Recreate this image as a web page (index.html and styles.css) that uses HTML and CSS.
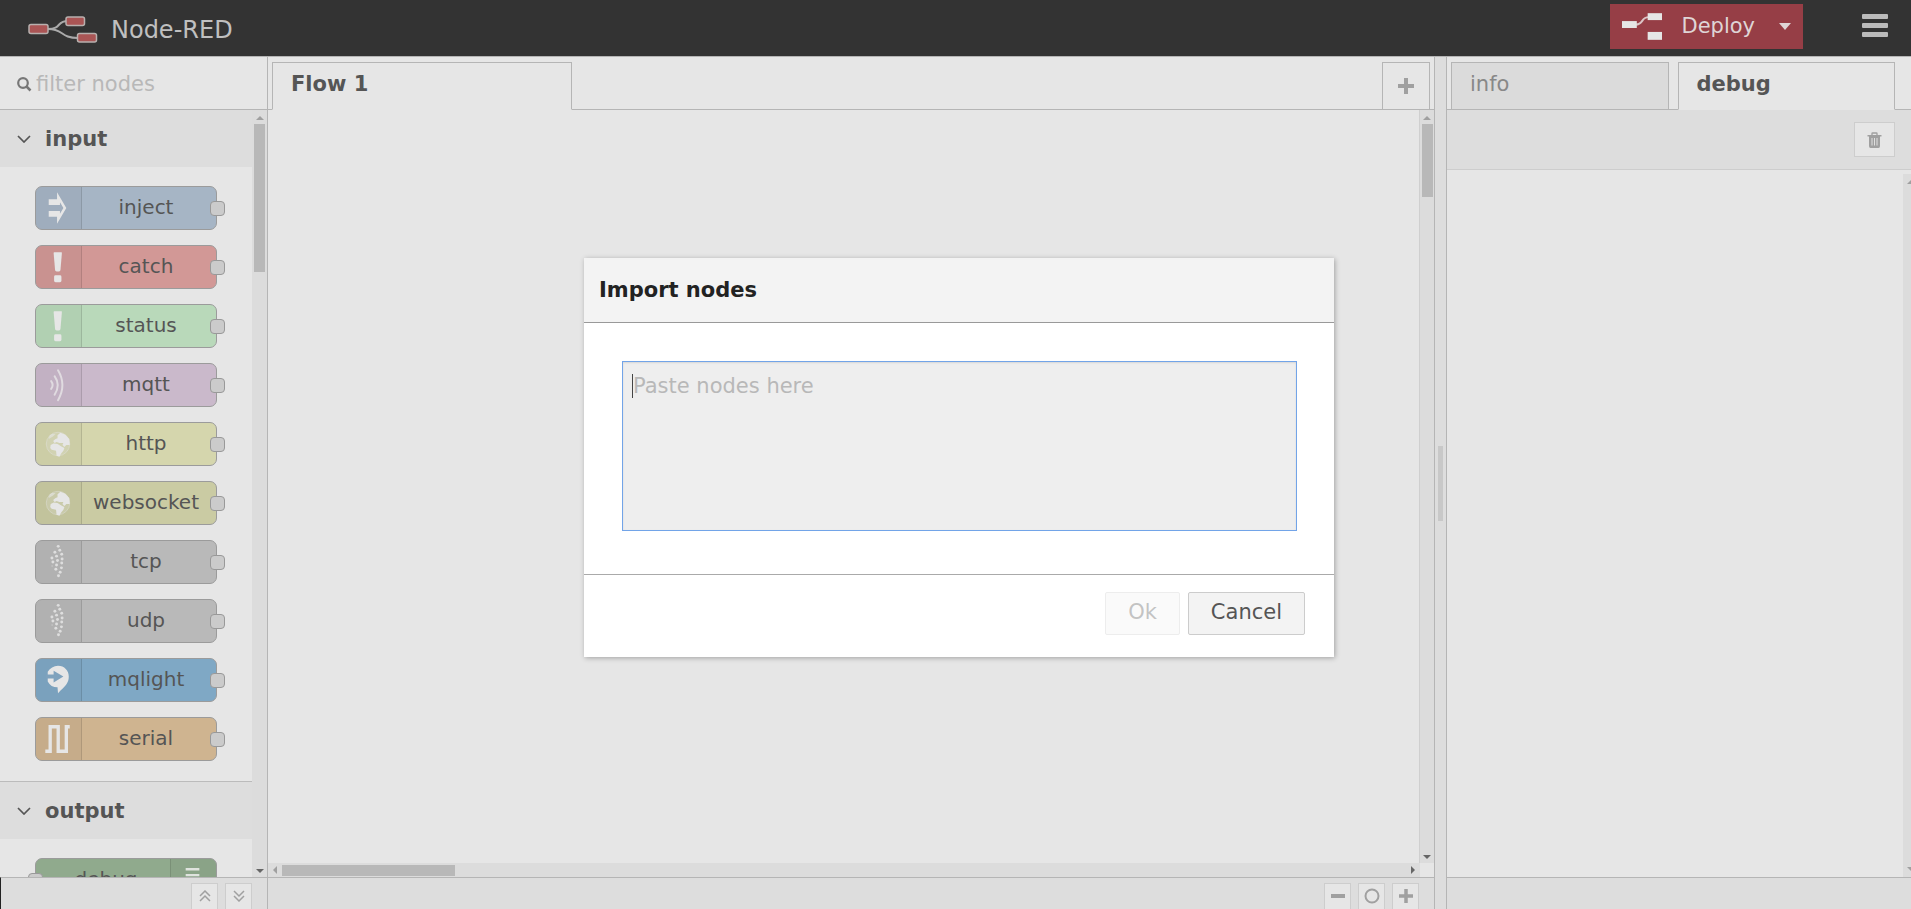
FILE: index.html
```html
<!DOCTYPE html>
<html lang="en">
<head>
<meta charset="utf-8">
<title>Node-RED</title>
<link rel="stylesheet" href="styles.css">
</head>
<body>
<svg class="defs" aria-hidden="true">
  <symbol id="i-inject" viewBox="0 0 46 42"><path fill="#e6e6e6" d="M13 12H21.500V5L31 21L21.500 37V30H13V24H24.500V27L28 21L24.500 15V18H13Z"/></symbol>
  <symbol id="i-alert" viewBox="0 0 46 42"><path fill="#e6e6e6" d="M18 6.500Q18 6 18.500 6H26Q26.500 6 26.500 6.500L25 24Q24.800 25.500 23.500 25.500H21Q19.700 25.500 19.500 24Z"/><rect x="18.500" y="29.500" width="7.500" height="7" rx="1.500" fill="#e6e6e6"/></symbol>
  <symbol id="i-wave" viewBox="0 0 46 42"><g fill="none" stroke="#e0dbe0" stroke-width="2" stroke-linecap="round"><path d="M15.500 17Q18.500 21 15.500 25"/><path d="M19 12Q25.500 21 19 31"/><path d="M22.500 6Q31.500 21 22.500 36.500"/></g></symbol>
  <symbol id="i-globe" viewBox="0 0 46 42"><circle cx="22.500" cy="21" r="12" fill="#e6e6e6" fill-opacity=".2" stroke="#e6e6e6" stroke-opacity=".4"/><g fill="#e6e6e6"><path d="M22 12L25 9.500L30 11.500L34 16L34.500 22L31 22L29 24L27 22L28 20L24 20L21 19L19 20L17.500 18L20 16L22 15Z"/><path d="M15 22L18 20.500L22 21L26 23.500L29 25L28 28L25.500 31L24 34L21 33L20.500 28L16 27L14.500 25Z"/><path d="M14 12L17 10.500L20 11L17 13.500L13 16Z" fill-opacity=".6"/></g></symbol>
  <symbol id="i-dots" viewBox="0 0 46 42"><g fill="#dedede"><circle cx="22.700" cy="5" r="1.500"/><circle cx="19.300" cy="11" r="1.500"/><circle cx="24.300" cy="9" r="1.500"/><circle cx="16.300" cy="17" r="1.500"/><circle cx="21" cy="15" r="1.500"/><circle cx="26.300" cy="13" r="1.500"/><circle cx="17.300" cy="21" r="1.500"/><circle cx="22" cy="19.500" r="1.500"/><circle cx="26.700" cy="18" r="1.500"/><circle cx="16.500" cy="25" r="1" fill-opacity=".3"/><circle cx="21" cy="24" r="1.500"/><circle cx="26.300" cy="22" r="1.500"/><circle cx="20.300" cy="28.500" r="1.500"/><circle cx="26" cy="27" r="1.500"/><circle cx="24.700" cy="31.500" r="1.500"/><circle cx="23" cy="35" r="1.500"/></g></symbol>
  <symbol id="i-mqlight" viewBox="0 0 46 42"><path fill="#e6e6e6" d="M12 12.500C14.500 9 18 6.500 22.500 6.500C29 6.500 33.500 11.500 33.500 17.500C33.500 24.500 30 27 22.500 34.500L22 28.500C17.500 28.500 14 26.500 12 22.500Z"/><path fill="#7fa2bd" d="M10 15.500H18V11.500L28 17.500L18 23.500V19.500H10Z"/></symbol>
  <symbol id="i-serial" viewBox="0 0 46 42"><path fill="none" stroke="#e6e6e6" stroke-width="3.400" d="M9.500 33.500H14.500V8.500H22.700V33.500H31V8.500H34.500"/></symbol>
  <symbol id="i-plus" viewBox="0 0 16 16"><path fill="none" stroke="#a0a0a0" stroke-width="4" d="M8 0V16M0 8H16"/></symbol>
  <symbol id="i-chevron" viewBox="0 0 14 8"><path fill="none" stroke="#555" stroke-width="1.700" d="M1 1L7 7L13 1"/></symbol>
</svg>

<header class="header">
  <a class="brand" href="#">
    <svg width="70" height="28" viewBox="0 0 70 28"><path d="M20 13C34 13 28 5 40 5M20 13C36 13 32 22 50 22" fill="none" stroke="#aaa" stroke-width="2"/><g fill="#aa5555" stroke="#b8b0ae" stroke-width="1.500"><rect x="1" y="8.500" width="19" height="9" rx="2"/><rect x="38" y="1" width="18.500" height="8.500" rx="2"/><rect x="49.500" y="17.500" width="19" height="8.500" rx="2"/></g></svg>
    <span>Node-RED</span>
  </a>
  <div class="actions">
    <button class="deploy"><svg width="41" height="28" viewBox="0 0 41 28"><path d="M14 11.500C22 11.500 19 4 27 4" fill="none" stroke="#dcc5c6" stroke-width="2"/><g fill="#e6e6e6"><rect y="8" width="15" height="7"/><rect x="26" width="15" height="7"/><rect x="26" y="19" width="15" height="8"/></g></svg><span>Deploy</span><i class="caret"></i></button>
    <button class="menu" aria-label="Menu"><i></i><i></i><i></i></button>
  </div>
</header>

<div class="main">
  <aside class="palette">
    <label class="filter"><svg width="15" height="15" viewBox="0 0 15 15"><circle cx="6" cy="6" r="4.800" fill="none" stroke="#777" stroke-width="2.200"/><path d="M9.500 9.500L13.500 13.500" stroke="#777" stroke-width="2.500"/></svg><input type="text" placeholder="filter nodes" aria-label="filter nodes"></label>
    <div class="scroll-row">
      <div class="categories">
        <section class="category">
          <h2><svg width="14" height="8"><use href="#i-chevron"/></svg>input</h2>
          <div class="nodes">
            <div class="node inject"><svg><use href="#i-inject"/></svg><span>inject</span><i class="port"></i></div>
            <div class="node catch"><svg><use href="#i-alert"/></svg><span>catch</span><i class="port"></i></div>
            <div class="node status"><svg><use href="#i-alert"/></svg><span>status</span><i class="port"></i></div>
            <div class="node mqtt"><svg><use href="#i-wave"/></svg><span>mqtt</span><i class="port"></i></div>
            <div class="node http"><svg><use href="#i-globe"/></svg><span>http</span><i class="port"></i></div>
            <div class="node websocket"><svg><use href="#i-globe"/></svg><span>websocket</span><i class="port"></i></div>
            <div class="node net"><svg><use href="#i-dots"/></svg><span>tcp</span><i class="port"></i></div>
            <div class="node net"><svg><use href="#i-dots"/></svg><span>udp</span><i class="port"></i></div>
            <div class="node mqlight"><svg><use href="#i-mqlight"/></svg><span>mqlight</span><i class="port"></i></div>
            <div class="node serial"><svg><use href="#i-serial"/></svg><span>serial</span><i class="port"></i></div>
          </div>
        </section>
        <section class="category">
          <h2><svg width="14" height="8"><use href="#i-chevron"/></svg>output</h2>
          <div class="nodes">
            <div class="node out debug"><svg viewBox="0 0 46 42"><path d="M15 10H29M15 16H29M15 22H29M15 28H29" stroke="#dfe3de" stroke-width="2.500"/></svg><span>debug</span><i class="port"></i></div>
          </div>
        </section>
      </div>
      <div class="vbar"><i class="up"></i><i class="thumb tall"></i><i class="down"></i></div>
    </div>
    <footer class="foot palette-foot">
      <button aria-label="Collapse all"><svg width="12" height="12" viewBox="0 0 12 12" fill="none" stroke="#a0a0a0" stroke-width="1.500"><path d="M1 6L6 1L11 6M1 11L6 6L11 11"/></svg></button>
      <button aria-label="Expand all"><svg width="12" height="12" viewBox="0 0 12 12" fill="none" stroke="#a0a0a0" stroke-width="1.500"><path d="M1 1L6 6L11 1M1 6L6 11L11 6"/></svg></button>
    </footer>
  </aside>

  <main class="workspace">
    <nav class="tabs flow-tabs">
      <a class="tab active" href="#">Flow 1</a>
      <button class="add" aria-label="Add flow"><svg width="16" height="16"><use href="#i-plus"/></svg></button>
    </nav>
    <div class="scroll-row">
      <div class="canvas"></div>
      <div class="vbar edged"><i class="up"></i><i class="thumb"></i><i class="down"></i></div>
    </div>
    <div class="hrow"><div class="hbar"><i class="left"></i><i class="hthumb"></i><i class="right"></i></div></div>
    <footer class="foot zoom-foot">
      <button aria-label="Zoom out"><svg width="14" height="14"><path d="M0 7H14" stroke="#a0a0a0" stroke-width="4"/></svg></button>
      <button aria-label="Reset zoom"><svg width="16" height="16"><circle cx="8" cy="8" r="6.500" fill="none" stroke="#a0a0a0" stroke-width="2"/></svg></button>
      <button aria-label="Zoom in"><svg width="14" height="14"><use href="#i-plus"/></svg></button>
    </footer>
  </main>

  <div class="separator"><i></i></div>

  <aside class="sidebar">
    <nav class="tabs side-tabs">
      <a class="tab" href="#">info</a>
      <a class="tab active" href="#">debug</a>
    </nav>
    <div class="toolbar"><button aria-label="Clear log"><svg width="15" height="16" viewBox="0 0 15 16"><path d="M5 3V1.500Q5 1 5.500 1H9.500Q10 1 10 1.500V3" fill="none" stroke="#a0a0a0" stroke-width="1.300"/><path d="M.5 3H14.500V4.500H.5Z" fill="#a0a0a0"/><path d="M2 4H13V14Q13 16 11.500 16H3.500Q2 16 2 14Z" fill="#a0a0a0"/><path d="M5 6V13.500M7.500 6V13.500M10 6V13.500" stroke="#e0e0e0"/></svg></button></div>
    <div class="scroll-row messages">
      <div class="canvas"></div>
      <div class="cutbar"><i class="up"></i><i class="down"></i></div>
    </div>
    <footer class="foot"></footer>
  </aside>
</div>

<div class="overlay">
  <section class="dialog" role="dialog" aria-labelledby="dlg-title">
    <h1 id="dlg-title">Import nodes</h1>
    <div class="dialog-body">
      <textarea placeholder="Paste nodes here" aria-label="Nodes"></textarea>
      <i class="cursor"></i>
    </div>
    <div class="dialog-actions">
      <button disabled>Ok</button>
      <button>Cancel</button>
    </div>
  </section>
</div>
</body>
</html>
```

FILE: styles.css
```css
* { box-sizing: border-box; }
body {
  margin: 0;
  height: 100vh;
  display: flex;
  flex-direction: column;
  overflow: hidden;
  background: #e6e6e6;
  color: #555;
  font: 21px/30px "DejaVu Sans", sans-serif;
}
button, input, textarea { font: inherit; color: inherit; margin: 0; }
button { padding: 0; border-radius: 0; }
a { color: inherit; text-decoration: none; }
i { display: block; }
.defs { position: absolute; width: 0; height: 0; }

.header {
  flex: none;
  height: 57px;
  background: #333;
  border-bottom: 1px solid #b5b5b5;
  display: flex;
  justify-content: space-between;
  padding: 0 21px 0 28px;
}
.brand { display: flex; align-items: center; gap: 13px; color: #c0c0c0; font-size: 24px; padding-top: 4px; }
.actions { display: flex; align-items: flex-start; padding-top: 4px; gap: 57px; }
.deploy {
  width: 193px;
  height: 45px;
  border: 0;
  background: #963e46;
  color: #dfd5d6;
  display: flex;
  align-items: center;
  padding: 0 12px;
}
.deploy span { padding: 0 24px 2px 19px; }
.caret { border: 6px solid transparent; border-top: 7px solid #dfd5d6; border-bottom: 0; }
.menu { width: 30px; height: 45px; padding: 10px 2px; border: 0; background: none; display: flex; flex-direction: column; gap: 4px; }
.menu i { width: 26px; height: 5px; border-radius: 1px; background: #bbb; }

.main { flex: 1; min-height: 0; display: flex; }
.palette { flex: none; width: 268px; border-right: 1px solid #b5b5b5; display: flex; flex-direction: column; }
.filter { flex: none; height: 53px; display: flex; align-items: center; gap: 4px; padding: 2px 17px 0; border-bottom: 1px solid #b5b5b5; }
.filter input { width: 200px; border: 0; padding: 0; background: none; outline: 0; }
::placeholder { color: #b8b8b8; opacity: 1; }
.scroll-row { flex: 1; min-height: 0; display: flex; overflow: hidden; }
.categories { flex: 1; overflow: hidden; }
.category { border-bottom: 1px solid #bbb; }
.category h2 {
  margin: 0;
  height: 57px;
  padding: 0 17px;
  display: flex;
  align-items: center;
  gap: 14px;
  background: #ddd;
  font-size: 21px;
}
.nodes { display: flex; flex-direction: column; gap: 15px; padding: 19px 35px 20px; }
.node {
  position: relative;
  width: 182px;
  height: 44px;
  border: 1px solid #9b9b9b;
  border-radius: 7px;
  display: flex;
  align-items: center;
  font-size: 20px;
}
.node svg { width: 46px; height: 42px; flex: none; background: rgba(0, 0, 0, .04); border-right: 1px solid rgba(0, 0, 0, .12); border-radius: 6px 0 0 6px; }
.node span { flex: 1; text-align: center; padding: 0 6px 2px 0; }
.port { position: absolute; right: -9px; top: 14px; width: 15px; height: 15px; border: 1px solid #999; border-radius: 4px; background: #cbcbcb; }
.node.out { flex-direction: row-reverse; }
.out svg { border-right: 0; border-left: 1px solid rgba(0, 0, 0, .12); border-radius: 0 6px 6px 0; }
.out span { padding: 0 0 2px 6px; }
.out .port { right: auto; left: -8px; }
.inject { background: #a6b5c5; }
.catch { background: #d29896; }
.status { background: #b9d9ba; }
.mqtt { background: #cab9cb; }
.http { background: #d5d6ad; }
.websocket { background: #cacba3; }
.net { background: #b9b9b9; }
.mqlight { background: #7fa8c5; }
.serial { background: #cfb490; }
.debug { background: #90aa8d; }

.vbar { flex: none; width: 15px; background: #dcdcdc; display: flex; flex-direction: column; align-items: center; padding: 6px 0 4px; }
.vbar.edged { border-left: 1px solid #cfcfcf; }
.up { border: 4px solid transparent; border-bottom-color: #a0a0a0; border-top: 0; margin-bottom: 4px; }
.down { border: 4px solid transparent; border-top-color: #666; border-bottom: 0; margin-top: auto; }
.thumb { width: 11px; height: 73px; background: #b8b8b8; }
.thumb.tall { height: 148px; }
.foot { flex: none; height: 32px; background: #ddd; border-top: 1px solid #b5b5b5; display: flex; align-items: flex-start; padding-top: 5px; overflow: hidden; }
.foot button, .toolbar button { background: #e6e6e6; border: 1px solid #cdcdcd; display: flex; align-items: center; justify-content: center; }
.foot button { width: 27px; height: 26px; padding-bottom: 1px; border-bottom: 0; flex: none; }
.palette-foot { justify-content: flex-end; gap: 7px; padding-right: 15px; border-left: 1px solid #222; }
.zoom-foot { justify-content: flex-end; gap: 7px; padding-right: 15px; }

.workspace { flex: 1; min-width: 0; display: flex; flex-direction: column; }
.canvas { flex: 1; }
.tabs { flex: none; height: 53px; border-bottom: 1px solid #b5b5b5; display: flex; padding: 5px 4px 0; }
.tab { height: 48px; border: 1px solid #b5b5b5; background: #dbdbdb; color: #888; padding: 6px 18px; }
.tab.active { background: #e6e6e6; color: #555; font-weight: bold; border-bottom-color: #e6e6e6; }
.flow-tabs { justify-content: space-between; }
.flow-tabs .tab { width: 300px; }
.add { width: 48px; height: 48px; background: none; border: 1px solid #b5b5b5; display: flex; align-items: center; justify-content: center; }
.side-tabs { gap: 9px; padding-right: 16px; }
.side-tabs .tab { flex: 1; }
.hrow { flex: none; height: 14px; padding-right: 14px; }
.hbar { height: 14px; background: #dcdcdc; display: flex; align-items: center; padding: 0 5px; }
.left { border: 4px solid transparent; border-right-color: #a0a0a0; border-left: 0; margin-right: 5px; }
.right { border: 4px solid transparent; border-left-color: #666; border-right: 0; margin-left: auto; }
.hthumb { width: 173px; height: 11px; background: #b8b8b8; }

.separator { flex: none; width: 13px; background: #ddd; border: solid #b5b5b5; border-width: 0 1px; display: flex; align-items: center; justify-content: center; }
.separator i { width: 5px; height: 75px; background: #c8c8c8; }
.sidebar { flex: none; width: 464px; display: flex; flex-direction: column; }
.toolbar { flex: none; height: 60px; background: #ddd; border-bottom: 1px solid #cdcdcd; padding: 12px 16px; display: flex; justify-content: flex-end; }
.toolbar button { width: 41px; height: 35px; }
.messages { padding-top: 4px; }
.cutbar { width: 8px; background: #dcdcdc; display: flex; flex-direction: column; padding: 6px 0 6px 4px; overflow: hidden; }
.cutbar .up, .cutbar .down { width: 8px; flex: none; }
.cutbar .down { border-top-color: #a0a0a0; }

.overlay { position: absolute; inset: 0; display: flex; align-items: center; justify-content: center; padding: 5px 0 0 7px; pointer-events: none; }
.dialog { width: 750px; background: #fff; box-shadow: 1px 1px 5px rgba(0, 0, 0, .3); pointer-events: auto; }
.dialog h1 { margin: 0; padding: 17px 15px; background: #f3f3f3; border-bottom: 1px solid #999; color: #222; font-size: 21px; line-height: 30px; }
.dialog-body { position: relative; padding: 38px 37px 43px 38px; }
.dialog textarea {
  display: block;
  width: 100%;
  height: 170px;
  padding: 9px 10px;
  background: #eee;
  border: 1px solid #72a4e8;
  border-radius: 0;
  box-shadow: inset 0 1px 2px rgba(0, 0, 0, .1);
  resize: none;
  outline: 0;
}
.cursor { position: absolute; left: 48px; top: 51px; width: 1px; height: 24px; background: #444; }
.dialog-actions { border-top: 1px solid #aaa; padding: 17px 29px 22px; display: flex; justify-content: flex-end; gap: 8px; }
.dialog-actions button { height: 43px; padding: 0 22px 2px; border: 1px solid #ccc; border-radius: 2px; background: #f3f3f3; }
.dialog-actions button:disabled { opacity: .35; color: #555; }
```
